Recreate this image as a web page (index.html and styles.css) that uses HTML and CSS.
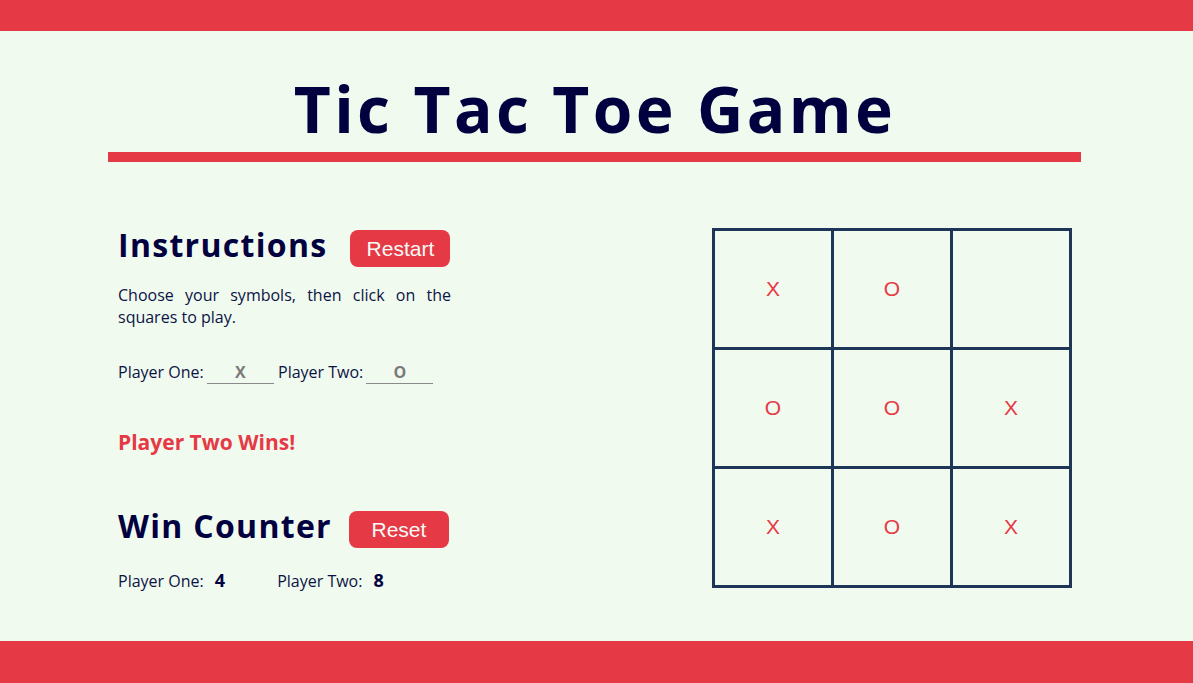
FILE: index.html
```html
<!DOCTYPE html>
<html lang="en">
<head>
<meta charset="utf-8">
<title>Tic Tac Toe Game</title>
<link rel="stylesheet" href="styles.css">
</head>
<body>
<div class="bar top-bar"></div>
<main class="page">
  <h1 class="title">Tic Tac Toe Game</h1>
  <section class="content">
    <div class="side">
      <div class="head-row">
        <h2 class="heading">Instructions</h2>
        <button class="btn">Restart</button>
      </div>
      <p class="intro">Choose your symbols, then click on the squares to play.</p>
      <div class="players">
        <label>Player One: <input class="symbol" type="text" value="X" readonly></label> <label>Player Two: <input class="symbol" type="text" value="O" readonly></label>
      </div>
      <p class="result">Player Two Wins!</p>
      <div class="head-row counter-row">
        <h2 class="heading">Win Counter</h2>
        <button class="btn">Reset</button>
      </div>
      <div class="counts">
        <span class="count-item">Player One: <strong class="num">4</strong></span>
        <span class="count-item">Player Two: <strong class="num">8</strong></span>
      </div>
    </div>
    <div class="board">
      <button class="cell">X</button>
      <button class="cell">O</button>
      <button class="cell"></button>
      <button class="cell">O</button>
      <button class="cell">O</button>
      <button class="cell">X</button>
      <button class="cell">X</button>
      <button class="cell">O</button>
      <button class="cell">X</button>
    </div>
  </section>
</main>
<div class="bar bottom-bar"></div>
</body>
</html>
```

FILE: styles.css
```css
* { box-sizing: border-box; }

html, body {
  margin: 0;
  padding: 0;
}

body {
  background: #F1FAEE;
  font-family: "Open Sans", "Liberation Sans", sans-serif;
  color: #06043f;
  height: 683px;
  overflow: hidden;
  display: flex;
  flex-direction: column;
}

.bar {
  background: #E63946;
  flex: none;
}

.top-bar { height: 31px; }
.bottom-bar { height: 42px; }

.page {
  flex: 1;
  padding-top: 34px;
}

.title {
  width: 973px;
  margin: 0 0 0 108px;
  text-align: center;
  font-size: 64px;
  font-weight: 700;
  line-height: 1.362;
  letter-spacing: 3.4px;
  color: #02013f;
  border-bottom: 10px solid #E63946;
  padding-left: 1px;
}

.content {
  width: 973px;
  margin: 60px 0 0 108px;
  padding: 0 9px 0 10px;
  display: flex;
  justify-content: space-between;
  align-items: flex-start;
}

.side {
  width: 360px;
}

.head-row {
  display: flex;
  align-items: baseline;
  gap: 23px;
  white-space: nowrap;
}

.counter-row {
  margin-top: 47px;
  gap: 17px;
}

.heading {
  margin: 0;
  font-size: 32px;
  font-weight: 700;
  line-height: 46px;
  letter-spacing: 1.3px;
  color: #02013f;
}

.btn {
  font-family: "Liberation Sans", Arial, sans-serif;
  font-size: 21px;
  line-height: 23px;
  padding: 7px 0;
  width: 100px;
  border: none;
  border-radius: 8px;
  background: #E63946;
  color: #F8FBF6;
  position: relative;
  top: -1px;
}

.intro {
  width: 333px;
  margin: 16px 0 0;
  font-size: 16px;
  line-height: 22px;
  text-align: justify;
  color: #0b1346;
}

.players {
  margin-top: 33px;
  font-size: 16px;
  line-height: 22px;
  color: #0b1346;
}

.symbol {
  width: 67px;
  height: 22px;
  padding: 0;
  margin-left: -1px;
  border: none;
  border-bottom: 1px solid #8a8a8a;
  background: transparent;
  font-family: "Open Sans", sans-serif;
  font-size: 16px;
  font-weight: 700;
  color: #7a7a7a;
  text-align: center;
  vertical-align: baseline;
}

.result {
  margin: 45px 0 0;
  font-size: 21px;
  font-weight: 700;
  line-height: 27px;
  color: #E63946;
}

.counts {
  margin-top: 20px;
  font-size: 16px;
  line-height: 22px;
  color: #0b1346;
  display: flex;
  gap: 52px;
}

.num {
  font-size: 18px;
  font-weight: 700;
  margin-left: 7px;
  color: #02013f;
}

.board {
  margin-top: 6px;
  width: 360px;
  height: 360px;
  display: grid;
  grid-template-columns: repeat(3, 1fr);
  grid-template-rows: repeat(3, 1fr);
  gap: 3px;
  padding: 3px;
  background: #1D3557;
}

.cell {
  background: #F1FAEE;
  border: none;
  padding: 0;
  font-family: "Liberation Sans", Arial, sans-serif;
  font-size: 21px;
  color: #E63946;
}
```
